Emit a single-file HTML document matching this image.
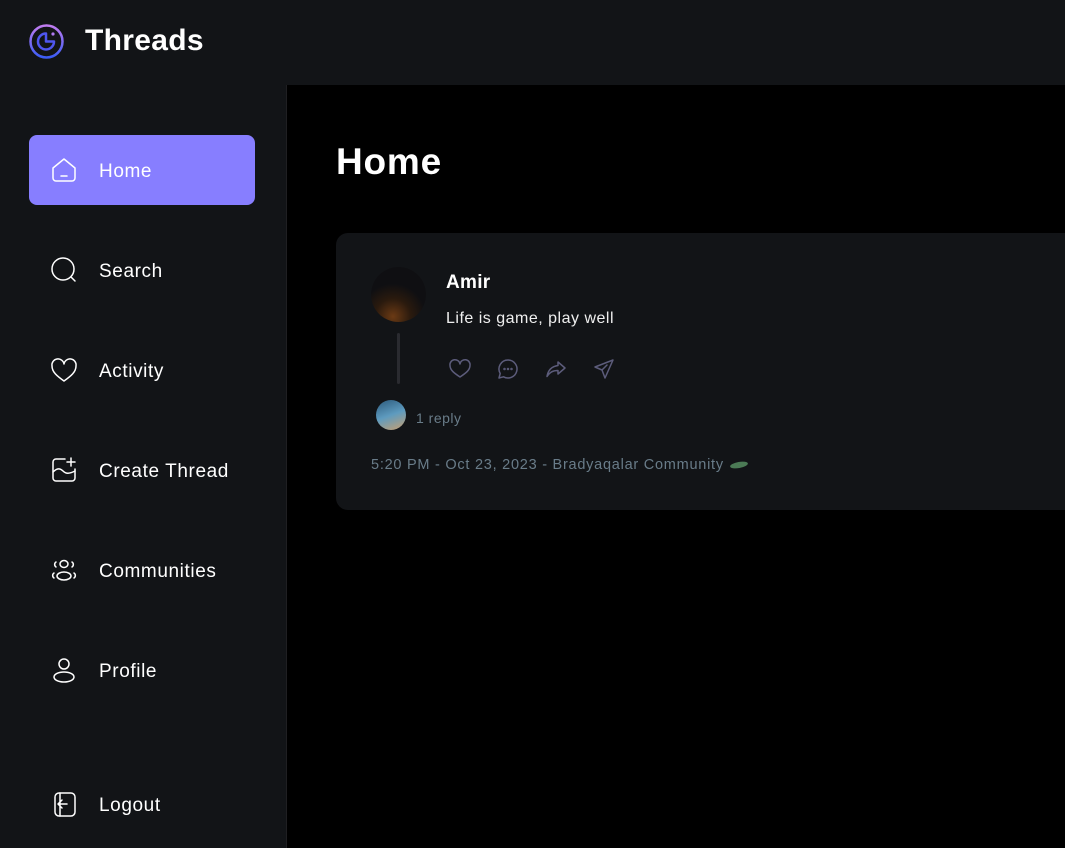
<!DOCTYPE html>
<html><head><meta charset="utf-8"><style>
*{margin:0;padding:0;box-sizing:border-box}
body{width:1065px;height:848px;background:#000;font-family:"Liberation Sans",sans-serif;color:#fff;position:relative;overflow:hidden}
.top{position:absolute;left:0;top:0;width:1065px;height:85px;background:#121417}
.side{position:absolute;left:0;top:85px;width:287px;height:763px;background:#121417;border-right:1px solid #1f1f22}
.logo{position:absolute;left:28px;top:23px}
.brand{position:absolute;left:85px;top:24px;font-size:30px;font-weight:bold;letter-spacing:0.3px}
.item{position:absolute;left:29px;width:226px;height:70px;border-radius:8px;display:flex;align-items:center;padding-left:20px;padding-top:3px;font-size:19px;letter-spacing:0.6px}
.item svg{width:30px;height:30px;margin-right:20px;margin-top:-3px;fill:none;stroke:#fff;stroke-width:1.5;stroke-linecap:round;stroke-linejoin:round}
.active{background:#877eff}
h1{position:absolute;left:336px;top:141px;font-size:37px;font-weight:bold;letter-spacing:0.8px}
.card{position:absolute;left:336px;top:233px;width:760px;height:277px;background:#121417;border-radius:12px}
.av{position:absolute;left:35px;top:34px;width:55px;height:55px;border-radius:50%;background:radial-gradient(circle at 40% 90%,#6b3a14 0,#2a1a0e 30%,#0f0f12 55%)}
.line{position:absolute;left:61px;top:100px;width:3px;height:51px;background:#2a2b30;border-radius:2px}
.name{position:absolute;left:110px;top:39px;font-size:19px;font-weight:bold;letter-spacing:0.3px}
.txt{position:absolute;left:110px;top:77px;font-size:16px;color:#efefef;letter-spacing:0.5px}
.acts{position:absolute;left:112px;top:124px;display:flex;gap:24px}
.acts svg{width:24px;height:24px;fill:none;stroke:#5c5c7b;stroke-width:1.5;stroke-linejoin:round;stroke-linecap:round}
.rav{position:absolute;left:40px;top:167px;width:30px;height:30px;border-radius:50%;background:linear-gradient(160deg,#2c5a7c,#5e9bbf 50%,#c9a070)}
.reply{position:absolute;left:80px;top:177px;font-size:14px;color:#697c89;letter-spacing:0.5px}
.meta{position:absolute;left:35px;top:224px;font-size:14.5px;color:#697c89;letter-spacing:0.75px}
.leaf{display:inline-block;width:18px;height:6px;border-radius:50%;background:#4b7a55;transform:rotate(-10deg);margin-left:6px;vertical-align:middle}
</style></head><body>
<div class="top"></div>
<svg class="logo" width="37" height="37" viewBox="0 0 37 37"><defs><linearGradient id="g" x1="0" y1="0" x2="0" y2="1"><stop offset="0" stop-color="#c07cf0"/><stop offset="1" stop-color="#3b5cf5"/></linearGradient></defs><circle cx="18.5" cy="18.5" r="16" fill="none" stroke="url(#g)" stroke-width="2.5"/><path d="M18 10.5a8 8 0 1 0 8 8h-8z" fill="none" stroke="#4f56f0" stroke-width="2.5" stroke-linejoin="round"/><circle cx="25" cy="11" r="1.6" fill="#b07af0"/></svg>
<div class="brand">Threads</div>
<div class="side"></div>
<div class="item active" style="top:135px"><svg viewBox="0 0 30 30"><path d="M4 13l11-9 11 9v10a3 3 0 0 1-3 3H7a3 3 0 0 1-3-3z"/><path d="M12 21h6"/></svg>Home</div>
<div class="item" style="top:235px"><svg viewBox="0 0 30 30"><circle cx="14" cy="14" r="11"/><path d="M22 22l4 4"/></svg>Search</div>
<div class="item" style="top:335px"><svg viewBox="0 0 30 30"><path d="M15 26C8 21 3 17 3 11a6 6 0 0 1 12-2 6 6 0 0 1 12 2c0 6-5 10-12 15z"/></svg>Activity</div>
<div class="item" style="top:435px"><svg viewBox="0 0 30 30"><path d="M16 4H7a3 3 0 0 0-3 3v16a3 3 0 0 0 3 3h16a3 3 0 0 0 3-3v-9"/><path d="M22 3v8M18 7h8"/><path d="M4 17c4-4 7-4 10-1s6 3 12 0"/></svg>Create Thread</div>
<div class="item" style="top:535px"><svg viewBox="0 0 30 30"><ellipse cx="15" cy="9" rx="4" ry="3.5"/><ellipse cx="15" cy="21" rx="7" ry="4"/><path d="M7 7a3 3 0 0 0 0 5M23 7a3 3 0 0 1 0 5M5 18a3 3 0 0 0 0 5M25 18a3 3 0 0 1 0 5"/></svg>Communities</div>
<div class="item" style="top:635px"><svg viewBox="0 0 30 30"><circle cx="15" cy="9" r="5"/><ellipse cx="15" cy="22" rx="10" ry="5"/></svg>Profile</div>
<div class="item" style="top:769px"><svg viewBox="0 0 30 30"><rect x="6" y="4" width="20" height="23" rx="4"/><path d="M11 4v23M18 15h-8M13 11l-4 4 4 4"/></svg>Logout</div>
<h1>Home</h1>
<div class="card">
<div class="av"></div><div class="line"></div>
<div class="name">Amir</div>
<div class="txt">Life is game, play well</div>
<div class="acts">
<svg viewBox="0 0 24 24"><path d="M12 20C6 16 2 13 2 8.5a5 5 0 0 1 10-1.5 5 5 0 0 1 10 1.5C22 13 18 16 12 20z"/></svg>
<svg viewBox="0 0 24 24"><path d="M12 3a9 9 0 1 1-4.5 16.8L3 21l1.2-4.5A9 9 0 0 1 12 3z"/><circle cx="8.5" cy="12" r=".5"/><circle cx="12" cy="12" r=".5"/><circle cx="15.5" cy="12" r=".5"/></svg>
<svg viewBox="0 0 24 24"><path d="M14 5l7 6-7 6v-3.5c-5 0-8 1.5-11 6 1-6 4-10 11-11z"/></svg>
<svg viewBox="0 0 24 24"><path d="M21 3L3 10l7 3 3 8z M10 13l5-5"/></svg>
</div>
<div class="rav"></div><div class="reply">1 reply</div>
<div class="meta">5:20 PM - Oct 23, 2023 - Bradyaqalar Community<span class="leaf"></span></div>
</div>
</body></html>
